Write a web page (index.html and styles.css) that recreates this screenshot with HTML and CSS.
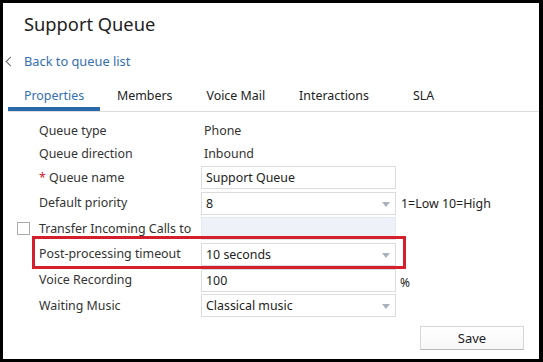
FILE: index.html
```html
<!DOCTYPE html>
<html lang="en">

<head>
    <meta charset="UTF-8">
    <title>Support Queue</title>
    <link rel="stylesheet" href="styles.css">
</head>

<body>
    <div class="frame">
        <h1 class="title">Support Queue</h1>

        <a class="back-link" href="#"><span class="chevron"></span>Back to queue list</a>

        <!-- tabs -->
        <div class="tabs">
            <span class="tab active">Properties</span>
            <span class="tab">Members</span>
            <span class="tab">Voice Mail</span>
            <span class="tab">Interactions</span>
            <span class="tab tab-last">SLA</span>
        </div>

        <!-- queue properties -->
        <div class="form-grid">
            <span></span>
            <span class="label">Queue type</span>
            <span class="value">Phone</span>
            <span></span>

            <span></span>
            <span class="label">Queue direction</span>
            <span class="value">Inbound</span>
            <span></span>

            <span></span>
            <span class="label"><span class="req">*</span> Queue name</span>
            <div class="field">Support Queue</div>
            <span></span>

            <span></span>
            <span class="label">Default priority</span>
            <div class="field select">8</div>
            <span class="hint">1=Low 10=High</span>

            <span class="check"></span>
            <span class="label">Transfer Incoming Calls to</span>
            <div class="field disabled"></div>
            <span></span>

            <span></span>
            <span class="label highlight">Post-processing timeout</span>
            <div class="field select">10 seconds</div>
            <span></span>

            <span></span>
            <span class="label">Voice Recording</span>
            <div class="field">100</div>
            <span class="hint unit">%</span>

            <span></span>
            <span class="label">Waiting Music</span>
            <div class="field select">Classical music</div>
            <span></span>
        </div>

        <div class="actions">
            <button class="save-btn">Save</button>
        </div>
    </div>
</body>

</html>
```

FILE: styles.css
```css
body {
    margin: 0;
    font-family: "Noto Sans", "Open Sans", sans-serif;
    font-size: 12.4px;
    color: #333;
}

.frame {
    width: 543px;
    height: 362px;
    box-sizing: border-box;
    border: 3px solid #000;
    border-right-width: 4px;
    background: #fff;
}

.title {
    margin: 0;
    padding: 9px 0 0 21px;
    height: 34px;
    box-sizing: border-box;
    font-size: 18.3px;
    font-weight: normal;
    color: #222;
    line-height: 24px;
}

.back-link {
    display: flex;
    align-items: center;
    height: 20px;
    margin-top: 14px;
    padding-left: 21px;
    position: relative;
    font-size: 12.8px;
    color: #3470b0;
    text-decoration: none;
}

.chevron {
    position: absolute;
    left: 4px;
    top: 7px;
    width: 6px;
    height: 6px;
    border-left: 1px solid #666;
    border-bottom: 1px solid #666;
    transform: rotate(45deg);
}

.tabs {
    display: flex;
    margin: 14px 0 0 5px;
    border-bottom: 1px solid #ddd;
    height: 26px;
}

.tab {
    padding: 0 17px;
    line-height: 22px;
    color: #222;
}

.tab.active {
    width: 92px;
    box-sizing: border-box;
    padding-left: 16px;
    color: #3470b0;
    border-bottom: 4px solid #2a6aab;
}

.tab-last {
    padding-left: 27px;
}

.form-grid {
    display: grid;
    grid-template-columns: 22px 162px 195px auto;
    grid-auto-rows: auto;
    row-gap: 2.6px;
    align-items: center;
    padding: 9px 0 0 14px;
}

.label,
.value {
    line-height: 20px;
}

.value {
    padding-left: 3px;
}

.req {
    color: #d0202a;
}

.field {
    position: relative;
    height: 23px;
    box-sizing: border-box;
    border: 1px solid #dcdcdc;
    padding: 0 4px;
    line-height: 21px;
    color: #222;
}

.field.disabled {
    background: #eef1f7;
    border-color: #e4e7ee;
}

.select::after {
    content: "";
    position: absolute;
    right: 5px;
    top: 9px;
    border-left: 4px solid transparent;
    border-right: 4px solid transparent;
    border-top: 5px solid #a9b1ba;
}

.hint {
    padding-left: 5px;
    color: #222;
}

.unit {
    padding-left: 4px;
    margin-top: 4px;
    font-size: 12px;
}

.check {
    width: 13px;
    height: 13px;
    box-sizing: border-box;
    border: 1px solid #aaa;
    margin-left: 0;
}

.highlight {
    position: relative;
}

/* red annotation box */
.highlight::before {
    content: "";
    position: absolute;
    left: -7px;
    top: -8px;
    width: 374px;
    height: 33px;
    box-sizing: border-box;
    border: 3px solid #d41f2c;
}

.actions {
    display: flex;
    justify-content: flex-end;
    padding: 9px 15px 0 0;
}

.save-btn {
    width: 104px;
    height: 24px;
    border: 1px solid #d6d6d6;
    border-bottom-color: #bbb;
    background: linear-gradient(#fff, #f7f7f7);
    font-family: inherit;
    font-size: 13px;
    color: #222;
}
```
